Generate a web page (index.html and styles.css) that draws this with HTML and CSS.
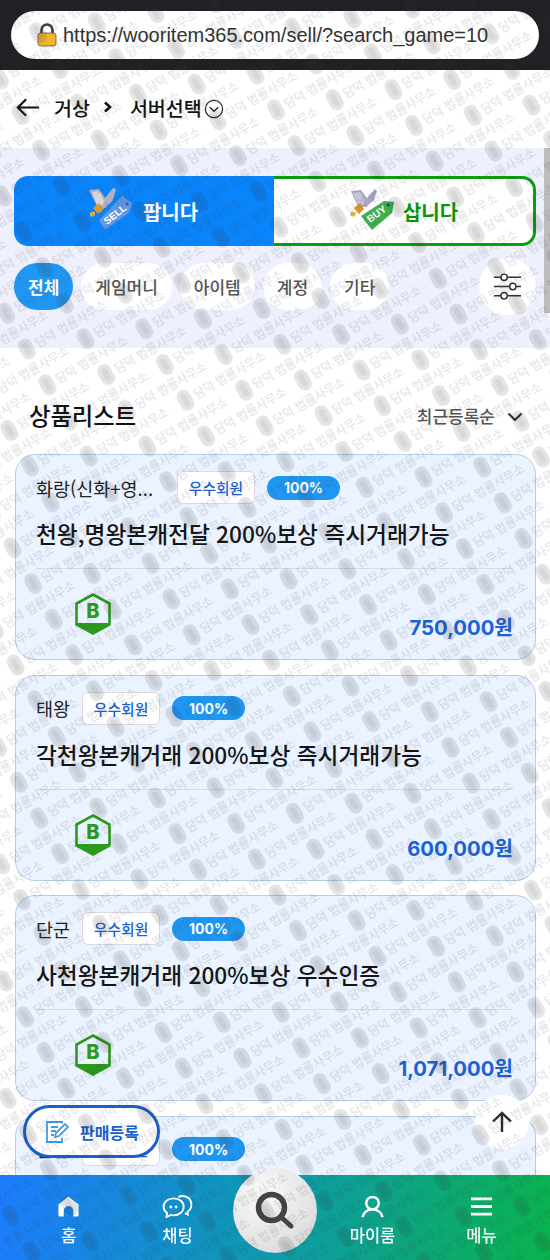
FILE: index.html
```html
<!DOCTYPE html>
<html lang="ko">
<head>
<meta charset="utf-8">
<title>우리아이템</title>
<link rel="stylesheet" href="styles.css">
</head>
<body>
<div class="urlbar">
  <div class="urlpill">
    <svg class="lock" viewBox="0 0 20 24"><path d="M4.5 11V7a5.5 5.5 0 0 1 11 0v4" fill="none" stroke="#3d3d3f" stroke-width="2.6"/><rect x="1" y="10" width="18" height="13" rx="2.5" fill="#f2b62e" stroke="#6b5a2a" stroke-width=".8"/></svg>
    <span class="urltext">https://wooritem365.com/sell/?search_game=10</span>
  </div>
</div>

<header class="crumbs">
  <svg class="back" viewBox="0 0 26 22"><path d="M25 11H2M11 2l-9 9 9 9" fill="none" stroke="#111" stroke-width="2.4"/></svg>
  <span class="crumb">거상</span>
  <svg class="sep" viewBox="0 0 10 12"><path d="M2 1.5 7 6l-5 4.5" fill="none" stroke="#111" stroke-width="2.6"/></svg>
  <span class="crumb">서버선택</span>
  <svg class="circ" viewBox="0 0 20 20"><circle cx="10" cy="10" r="8.6" fill="none" stroke="#222" stroke-width="1.2"/><path d="M5.8 8.3 10 12.3l4.2-4" fill="none" stroke="#222" stroke-width="1.3"/></svg>
</header>

<section class="panel">
  <div class="tabs">
    <div class="tab tab-sell">
      <svg class="tabicon" viewBox="0 0 46 46">
        <polygon points="0,2 10,1 16,10 24,0 27,1 24,12 16,20 9,20 4,10" fill="#b4b0c2"/>
        <polygon points="3,4 10,3 15,13 13,19 8,17" fill="#d9d6e0"/>
        <polygon points="4,20 10,15 15,21 9,26" fill="#e89c2c"/>
        <circle cx="3.500" cy="26" r="2.600" fill="#e3b648"/>
        <polygon points="10,32 33,8 43,15 40,25 16,42" fill="#5f97e2"/>
        <circle cx="38" cy="16" r="1.600" fill="#6a3fb0"/>
        <text class="tagtext" x="0" y="0" transform="translate(18 37) rotate(-38)">SELL</text>
      </svg>
      <span>팝니다</span>
    </div>
    <div class="tab tab-buy">
      <svg class="tabicon" viewBox="0 0 46 46">
        <polygon points="2,3 12,2 18,10 26,1 28,3 25,12 17,19 10,19 5,10" fill="#a9a6c8"/>
        <polygon points="4,5 11,4 16,13 14,18 9,16" fill="#c9c6d9"/>
        <polygon points="5,20 11,15 15,21 10,26" fill="#dd9029"/>
        <circle cx="4" cy="26" r="2.600" fill="#e3b648"/>
        <polygon points="12,28 35,13 45,14 43,25 23,42" fill="#3fae4c"/>
        <circle cx="39" cy="17" r="1.400" fill="#23405f"/>
        <text class="tagtext" x="0" y="0" transform="translate(21 35) rotate(-36)">BUY</text>
      </svg>
      <span>삽니다</span>
    </div>
  </div>
  <div class="chips">
    <span class="chip chip-on">전체</span>
    <span class="chip">게임머니</span>
    <span class="chip">아이템</span>
    <span class="chip">계정</span>
    <span class="chip">기타</span>
    <button class="filter" aria-label="필터">
      <svg viewBox="0 0 30 30"><g fill="none" stroke="#333" stroke-width="1.5"><path d="M1 5.5h7M15 5.5h14M1 15h16M24 15h5M1 24.500h7M15 24.500h14"/><circle cx="11.500" cy="5.500" r="3.300"/><circle cx="20.500" cy="15" r="3.300"/><circle cx="11.500" cy="24.500" r="3.300"/></g></svg>
    </button>
  </div>
</section>

<div class="listhead">
  <h2>상품리스트</h2>
  <div class="sort">
    <span>최근등록순</span>
    <svg viewBox="0 0 16 10"><path d="M1.500 1.500 8 8l6.500-6.500" fill="none" stroke="#333" stroke-width="2.200"/></svg>
  </div>
</div>

<main class="cards">
  <article class="card">
    <div class="meta"><span class="name name-long">화랑(신화+영...</span><span class="badge">우수회원</span><span class="rate">100%</span></div>
    <h3>천왕,명왕본캐전달 200%보상 즉시거래가능</h3>
    <div class="foot">
      <svg class="grade" viewBox="0 0 36 42"><path d="M18 1.500 34.500 10.500v21L18 40.500 1.500 31.500v-21z" fill="none" stroke="#2c9a1c" stroke-width="2.600"/><path d="M1.500 30h33v1.500L18 41 1.500 31.500z" fill="#2c9a1c"/><text class="gradetext" x="18" y="25">B</text></svg>
      <span class="price">750,000원</span>
    </div>
  </article>
  <article class="card">
    <div class="meta"><span class="name">태왕</span><span class="badge">우수회원</span><span class="rate">100%</span></div>
    <h3>각천왕본캐거래 200%보상 즉시거래가능</h3>
    <div class="foot">
      <svg class="grade" viewBox="0 0 36 42"><path d="M18 1.500 34.500 10.500v21L18 40.500 1.500 31.500v-21z" fill="none" stroke="#2c9a1c" stroke-width="2.600"/><path d="M1.500 30h33v1.500L18 41 1.500 31.500z" fill="#2c9a1c"/><text class="gradetext" x="18" y="25">B</text></svg>
      <span class="price">600,000원</span>
    </div>
  </article>
  <article class="card">
    <div class="meta"><span class="name">단군</span><span class="badge">우수회원</span><span class="rate">100%</span></div>
    <h3>사천왕본캐거래 200%보상 우수인증</h3>
    <div class="foot">
      <svg class="grade" viewBox="0 0 36 42"><path d="M18 1.500 34.500 10.500v21L18 40.500 1.500 31.500v-21z" fill="none" stroke="#2c9a1c" stroke-width="2.600"/><path d="M1.500 30h33v1.500L18 41 1.500 31.500z" fill="#2c9a1c"/><text class="gradetext" x="18" y="25">B</text></svg>
      <span class="price">1,071,000원</span>
    </div>
  </article>
  <article class="card">
    <div class="meta"><span class="name">단군</span><span class="badge">우수회원</span><span class="rate">100%</span></div>
  </article>
</main>

<button class="regbtn">
  <svg viewBox="0 0 24 24"><g fill="none" stroke="#3f9ee8" stroke-width="1.800"><path d="M17 3.500V2H2v20h15v-4"/><path d="M6 7h7M6 11h5M6 15h3"/><path d="M10 17l1-4 9-9 3 3-9 9z"/></g></svg>
  <span>판매등록</span>
</button>
<button class="topbtn" aria-label="맨 위로">
  <svg viewBox="0 0 24 24"><path d="M12 22V3M3 11.500 12 3l9 8.500" fill="none" stroke="#2b2b2b" stroke-width="2.400"/></svg>
</button>

<nav class="nav">
  <div class="navitem">
    <svg viewBox="0 0 24 24"><path d="M12 1.500 22.500 10v11a1.500 1.500 0 0 1-1.500 1.500h-4v-6a5 5 0 0 0-10 0v6H3A1.500 1.500 0 0 1 1.500 21V10z" fill="#fff"/></svg>
    <span>홈</span>
  </div>
  <div class="navitem">
    <svg class="wide" viewBox="0 0 32 24"><g fill="none" stroke="#fff" stroke-width="2"><path d="M12 3.500c6 0 10.500 4 10.500 8.800s-4.500 8.800-10.500 8.800c-1 0-2 0-3-.3L4.500 23l.6-4.200C2.800 17 1.500 14.800 1.500 12.300c0-4.800 4.500-8.800 10.500-8.800z"/><path d="M17 2.200c1-.7 2.700-1.200 4-1.200 5.500 0 9.500 3.500 9.500 9 0 3.500-1.500 6-4 7.500l.3 3-3.300-1.500"/></g><circle cx="9" cy="12.500" r="1.500" fill="#fff"/><circle cx="14.500" cy="12.500" r="1.500" fill="#fff"/></svg>
    <span>채팅</span>
  </div>
  <button class="searchbtn" aria-label="검색">
    <svg viewBox="0 0 40 40"><circle cx="16.500" cy="16.500" r="13" fill="none" stroke="#444" stroke-width="5.500"/><path d="M26 26l10 9" stroke="#444" stroke-width="5" stroke-linecap="round"/></svg>
  </button>
  <div class="navitem">
    <svg viewBox="0 0 24 24"><g fill="none" stroke="#fff" stroke-width="2.600"><circle cx="12" cy="8.500" r="6.500"/><path d="M1.500 23c1.500-5 5-8 10.500-8s9 3 10.500 8"/></g></svg>
    <span>마이룸</span>
  </div>
  <div class="navitem">
    <svg viewBox="0 0 24 24"><path d="M1 4h22M1 12h22M1 20h22" stroke="#fff" stroke-width="3"/></svg>
    <span>메뉴</span>
  </div>
</nav>

<div class="scrollthumb"></div>

<svg class="watermark" width="550" height="1260" aria-hidden="true">
  <defs>
    <g id="wm">
      <rect class="wmpill" x="-7" y="-11" width="14" height="22" rx="7"/>
      <rect class="wmcore" x="-3" y="-7" width="6" height="14" rx="3"/>
      <text class="wmtext" x="10.500" y="4.500">담덕 법률사무소</text>
    </g>
    <pattern id="wmrows" patternUnits="userSpaceOnUse" width="111.800" height="41.250" patternTransform="translate(344.470 356.160) rotate(-30)">
      <use href="#wm" x="8" y="20.600"/>
    </pattern>
    <pattern id="wmrowsalt" patternUnits="userSpaceOnUse" width="111.800" height="41.250" patternTransform="translate(344.470 356.160) rotate(-30) translate(55.900 20.625)">
      <use href="#wm" x="8" y="20.600"/>
    </pattern>
  </defs>
  <rect width="550" height="1260" fill="url(#wmrows)"/>
  <rect width="550" height="1260" fill="url(#wmrowsalt)"/>
</svg>
</body>
</html>
```

FILE: styles.css
```css
* { box-sizing: border-box; }
html, body { margin: 0; padding: 0; height: 1260px; overflow: hidden; }
body {
  position: relative;
  background: #fff;
  color: #1a1a1a;
  font-family: "Noto Sans CJK KR", "Inter", sans-serif;
}
button { border: 0; padding: 0; font: inherit; cursor: pointer; }
h2, h3 { margin: 0; }

.urlbar { height: 70px; background: #202124; padding: 11px 11px 0; }
.urlpill {
  height: 48px; width: 528px; border-radius: 24px; background: #fff;
  display: flex; align-items: center; padding-left: 26px; gap: 6px;
}
.lock { width: 20px; height: 24px; flex: none; }
.urltext { font-family: "Liberation Sans", sans-serif; font-size: 20px; color: #333; white-space: nowrap; }

.crumbs { height: 78px; display: flex; align-items: center; padding: 0 0 4px 16px; }
.back { width: 24px; height: 21px; margin-right: 14px; }
.crumb { font-size: 19.500px; font-weight: 500; color: #111; }
.sep { width: 10px; height: 12px; margin: 0 17px 0 13px; }
.circ { width: 20px; height: 20px; margin-left: 2px; margin-top: 3px; }

.panel { height: 200px; background: #eef1fd; padding: 28px 14px 0; }
.tabs { display: flex; height: 70px; width: 522px; }
.tab {
  flex: 1; display: flex; align-items: center; justify-content: center; gap: 8px;
  font-size: 20px; font-weight: 700;
}
.tab-sell { background: #0a84fb; color: #fff; border-radius: 14px 0 0 14px; }
.tab-buy { background: #fff; color: #0b950b; border: 3px solid #0d9e0d; border-left: 1px solid #0a84fb; border-radius: 0 14px 14px 0; }
.tabicon { width: 46px; height: 46px; flex: none; }
.tagtext { font-family: "Liberation Sans", sans-serif; font-size: 10px; font-weight: 700; fill: #fff; }

.chips { display: flex; align-items: center; gap: 8px; margin-top: 17px; height: 47px; }
.chip {
  height: 47px; border-radius: 24px; background: #fff; padding: 0 14px;
  display: flex; align-items: center;
  font-size: 17px; font-weight: 500; color: #555;
}
.chip-on { background: #1f97f2; color: #fff; font-weight: 700; }
.filter {
  margin-left: auto; width: 57px; height: 57px; border-radius: 50%; background: #fff;
  display: flex; align-items: center; justify-content: center;
}
.filter svg { width: 29px; height: 29px; }

.listhead {
  height: 106px; padding: 52px 27px 24px 29px;
  display: flex; align-items: center; justify-content: space-between;
}
.listhead h2 { font-size: 23.300px; font-weight: 500; color: #111; }
.sort { display: flex; align-items: center; gap: 12px; font-size: 17px; font-weight: 500; color: #555; }
.sort svg { width: 16px; height: 10px; margin-top: 3px; }

.cards { display: flex; flex-direction: column; gap: 14.600px; padding: 0 14px 0 15px; }
.card {
  height: 206px; flex: none; background: #eaf3ff; border: 1px solid #b5cfe9; border-radius: 20px;
  padding: 16px 22px 0 20px;
}
.meta { display: flex; align-items: center; gap: 12px; height: 33px; }
.name { font-size: 18.500px; font-weight: 400; color: #222; }
.name-long { width: 129px; flex: none; white-space: nowrap; }
.badge {
  width: 78px; height: 33px; border: 1px solid #d9d9de; border-radius: 6px; background: #fff;
  display: flex; align-items: center; justify-content: center;
  font-size: 14.800px; font-weight: 500; color: #1a63d6;
}
.rate {
  width: 73px; height: 24px; border-radius: 12px; background: #1f97f2; color: #fff;
  display: flex; align-items: center; justify-content: center;
  font-family: "Inter", sans-serif; font-size: 14px; font-weight: 700;
}
.card h3 {
  margin-top: 15px; height: 30px; line-height: 30px; white-space: nowrap;
  font-size: 22.700px; font-weight: 500; color: #151515;
}
.foot {
  margin-top: 19px; border-top: 1px solid #cfdcec; padding: 24px 0 0 39px;
  display: flex; justify-content: space-between; align-items: flex-end;
}
.grade { width: 36px; height: 42px; flex: none; }
.gradetext { font-family: "Inter", sans-serif; font-size: 20px; font-weight: 800; fill: #2c9a1c; text-anchor: middle; }
.price { font-family: "Inter", "Noto Sans CJK KR", sans-serif; font-size: 20.300px; font-weight: 700; color: #1a63d6; line-height: 24px; margin-bottom: -5px; }

.regbtn {
  position: fixed; left: 23px; top: 1105px; width: 137px; height: 53px; z-index: 20;
  background: #fff; border: 3px solid #1a5fd0; border-radius: 27px;
  display: flex; align-items: center; padding-left: 19px; gap: 11px;
  font-size: 16px; font-weight: 700; color: #1a5fd0;
}
.regbtn svg { width: 24px; height: 24px; flex: none; }
.topbtn {
  position: fixed; left: 475px; top: 1095px; width: 54px; height: 54px; border-radius: 50%; z-index: 20;
  background: #fff; display: flex; align-items: center; justify-content: center;
}
.topbtn svg { width: 24px; height: 24px; }

.nav {
  position: fixed; left: 0; top: 1175px; width: 550px; height: 85px; z-index: 10;
  background: linear-gradient(100deg, #1c7cff 0%, #0f97b4 45%, #0ab24d 100%);
  display: grid; grid-template-columns: 109px 109px 86px 109px 109px; padding: 0 14px;
}
.navitem {
  display: flex; flex-direction: column; align-items: center; padding-top: 20px; gap: 5px;
  font-size: 16.500px; font-weight: 500; color: #fff;
}
.navitem svg { width: 23px; height: 23px; }
.navitem svg.wide { width: 31px; }
.searchbtn {
  width: 84px; height: 85px; margin: -7px 0 0 1px; border-radius: 50%;
  background: radial-gradient(circle at 35% 30%, #fafafa, #e6e6e6 55%, #cfcfcf 100%);
  display: flex; align-items: center; justify-content: center;
}
.searchbtn svg { width: 40px; height: 40px; }

.scrollthumb { position: fixed; right: 0; top: 148px; width: 6px; height: 165px; background: #bdbdc0; z-index: 15; }

.watermark { position: fixed; left: 0; top: 0; z-index: 100; pointer-events: none; }
.wmpill { fill: rgba(50, 50, 55, .13); }
.wmcore { fill: rgba(50, 50, 55, .07); }
.wmtext { font-size: 12px; font-weight: 500; fill: rgba(50, 50, 55, .14); }
```
